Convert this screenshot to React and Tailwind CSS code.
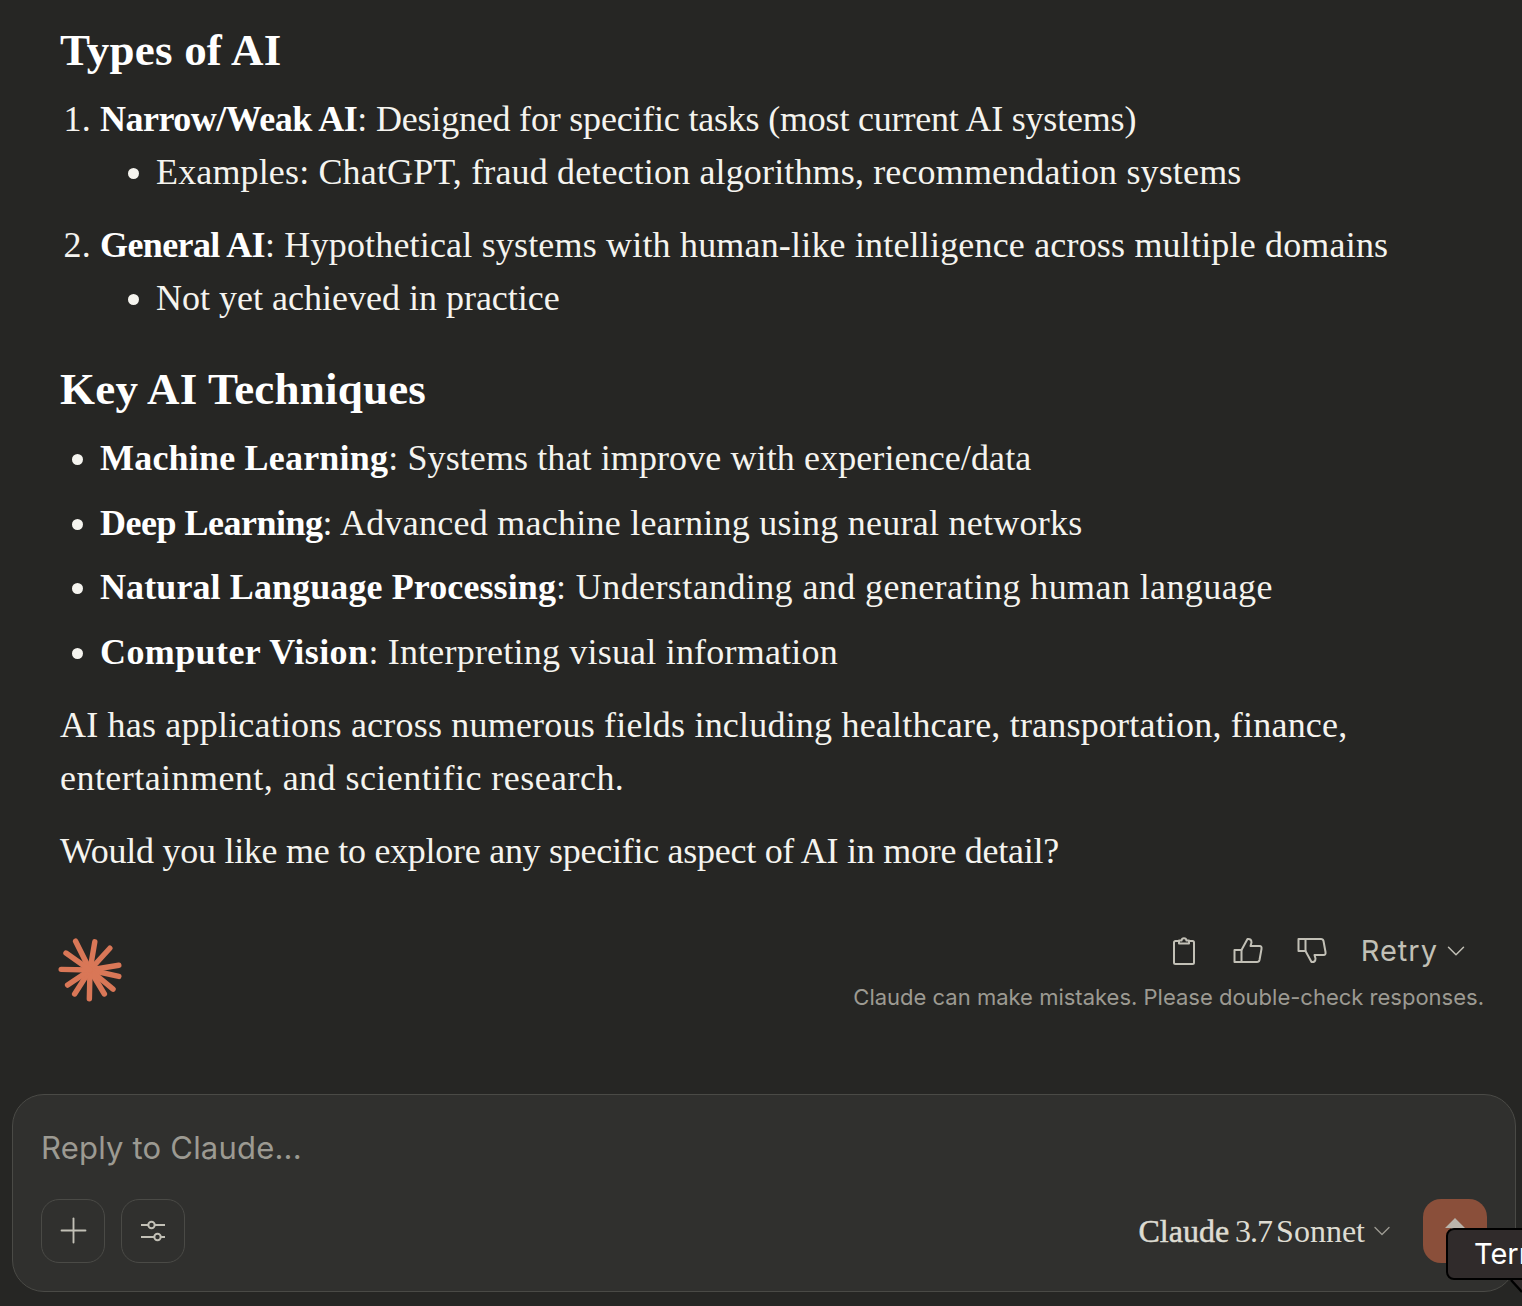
import { ChevronDown, Plus } from "lucide-react";

const serif = "font-['Liberation_Serif',serif]";
const sans = "font-['Inter',sans-serif]";

const rays = [
  [105, 60], [165, 62], [212, 82], [240, 135], [240, 170], [222, 210],
  [195, 225], [148, 240], [102, 225], [80, 197], [60, 148], [75, 97],
];

function Spark() {
  return (
    <svg width="64" height="64" viewBox="50 50 200 200">
      <circle cx="150" cy="150" r="24" fill="#d97757" />
      {rays.map(([x, y], i) => (
        <line key={i} x1="150" y1="150" x2={x} y2={y} stroke="#d97757" strokeWidth="17" strokeLinecap="round" />
      ))}
    </svg>
  );
}

function Clipboard() {
  return (
    <svg width="24" height="28" viewBox="0 0 24 28" fill="none" stroke="#c2c0b6" strokeWidth="2" strokeLinejoin="round">
      <path d="M7 4H3.5A1.5 1.5 0 0 0 2 5.5V25.5A1.5 1.5 0 0 0 3.5 27H20.5A1.5 1.5 0 0 0 22 25.5V5.5A1.5 1.5 0 0 0 20.5 4H17" />
      <path d="M7 6.5V3.5H9.5C10 0.5 14 0.5 14.5 3.5H17V6.5Z" />
    </svg>
  );
}

function Thumb({ down = false }) {
  return (
    <svg width="30" height="27" viewBox="0 0 30 27" fill="none" stroke="#c2c0b6" strokeWidth="2" strokeLinejoin="round" className={down ? "-scale-y-100" : ""}>
      <path d="M1.5 13H8.5V25H1.5Z" />
      <path d="M8.5 13 14.5 2Q18.5 1.5 18.5 5.5L17.5 9H26.5Q29 9 28.5 12L26.5 23Q26 25 24 25H8.5" />
    </svg>
  );
}

function Sliders() {
  return (
    <svg width="26" height="24" viewBox="0 0 26 24" fill="none" stroke="#c2c0b6" strokeWidth="2">
      <path d="M1 6h7M15 6h10M1 18h13M21 18h4" />
      <circle cx="11.5" cy="6" r="3.2" />
      <circle cx="17.5" cy="18" r="3.2" />
    </svg>
  );
}

function Strong({ className = "tracking-normal", children }) {
  return <strong className={`font-bold text-white ${className}`}>{children}</strong>;
}

export default function App() {
  return (
    <div className={`relative h-[1306px] w-full overflow-hidden bg-[#262624] pt-[28px] text-[36px] leading-[53px] tracking-[0.15px] text-[#f5f4ef] ${serif}`}>
      <div className="px-[60px]">
        <h2 className="text-[45px] font-bold leading-[44px] tracking-[0.2px] text-white">Types of AI</h2>
        <ol className="mt-[21px] list-decimal pl-[40px]">
          <li>
            <Strong className="tracking-[-0.5px]">Narrow/Weak AI</Strong>
            <span className="tracking-[-0.2px]">: Designed for specific tasks (most current AI systems)</span>
            <ul className="list-disc pl-[56px]">
              <li>Examples: ChatGPT, fraud detection algorithms, recommendation systems</li>
            </ul>
          </li>
          <li className="mt-[20px]">
            <Strong className="tracking-[-0.6px]">General AI</Strong>
            <span className="tracking-[0.18px]">: Hypothetical systems with human-like intelligence across multiple domains</span>
            <ul className="list-disc pl-[56px]">
              <li className="tracking-normal">Not yet achieved in practice</li>
            </ul>
          </li>
        </ol>

        <h2 className="mt-[42px] text-[45px] font-bold leading-[44px] tracking-[0.2px] text-white">Key AI Techniques</h2>
        <ul className="mt-[21px] flex list-disc flex-col gap-[11.5px] pl-[40px]">
          <li>
            <Strong className="tracking-[0.2px]">Machine Learning</Strong>
            <span className="tracking-[0.1px]">: Systems that improve with experience/data</span>
          </li>
          <li>
            <Strong className="tracking-[-0.5px]">Deep Learning</Strong>
            <span className="tracking-[0.25px]">: Advanced machine learning using neural networks</span>
          </li>
          <li>
            <Strong className="tracking-[0.1px]">Natural Language Processing</Strong>
            <span className="tracking-[0.4px]">: Understanding and generating human language</span>
          </li>
          <li>
            <Strong className="tracking-[0.4px]">Computer Vision</Strong>
            <span className="tracking-[0.2px]">: Interpreting visual information</span>
          </li>
        </ul>

        <p className="mt-[20px]">
          <span className="tracking-[0.2px]">AI has applications across numerous fields including healthcare, transportation, finance,</span>
          <br />
          <span className="tracking-[0.45px]">entertainment, and scientific research.</span>
        </p>
        <p className="mt-[20px] tracking-[-0.27px]">Would you like me to explore any specific aspect of AI in more detail?</p>
      </div>

      {/* Message footer */}
      <div className={`mt-[49px] flex h-[92px] items-start justify-between pl-[58px] pr-[38px] tracking-normal ${sans}`}>
        <div className="pt-[11px]">
          <Spark />
        </div>
        <div className="flex flex-col items-end">
          <div className="flex h-[48px] items-center pr-[13px] text-[#c2c0b6]">
            <div className="flex w-[64px] justify-center"><Clipboard /></div>
            <div className="flex w-[64px] justify-center"><Thumb /></div>
            <div className="flex w-[64px] justify-center"><Thumb down /></div>
            <span className="ml-[17px] text-[29px] leading-none tracking-[1px]">Retry</span>
            <ChevronDown size={30} strokeWidth={1.2} className="ml-[3px]" />
          </div>
          <p className="mt-[7px] text-[22px] leading-[30px] text-[#9c9a92]">
            Claude can make mistakes. Please double-check responses.
          </p>
        </div>
      </div>

      {/* Reply box */}
      <div className={`ml-[12px] mr-[6px] mt-[75px] h-[198px] rounded-[32px] border border-[#4a4a46] bg-[#30302e] px-[28px] tracking-normal ${sans}`}>
        <p className="pt-[34px] text-[31px] leading-[38px] tracking-[0.2px] text-[#9c9a92]">Reply to Claude...</p>
        <div className="mt-[32px] flex items-center">
          <div className="flex size-[64px] items-center justify-center rounded-[18px] border border-[#4a4a46] text-[#c2c0b6]">
            <Plus size={41} strokeWidth={1.1} />
          </div>
          <div className="ml-[16px] flex size-[64px] items-center justify-center rounded-[18px] border border-[#4a4a46]">
            <Sliders />
          </div>
          <div className={`ml-auto flex items-center text-[32px] leading-none text-[#dedcd2] ${serif}`}>
            <span className="[-webkit-text-stroke:0.5px_#dedcd2]">Claude</span>
            <span className="ml-[6px] tracking-[-1px]">3.7</span>
            <span className="ml-[4px]">Sonnet</span>
            <ChevronDown size={28} strokeWidth={1.2} className="ml-[3px] text-[#9c9a92]" />
          </div>
          <div className="ml-[27px] flex size-[64px] justify-center rounded-[18px] bg-[#8a4f3a] pt-[19px]">
            <svg width="22" height="22" viewBox="0 0 22 22"><path d="M11 0 21 10H15V22H7V10H1Z" fill="#b9b4ab" /></svg>
          </div>
        </div>
      </div>

      {/* Tooltip clipped by the window edge */}
      <div className={`absolute left-[1446px] top-[1228px] h-[52px] w-[120px] rounded-[8px] border-2 border-black bg-[#302b2b] pl-[26px] text-[29px] leading-[48px] tracking-normal text-white ${sans}`}>
        Terr
      </div>
      <svg className="absolute left-[1500px] top-[1276px]" width="22" height="20" viewBox="0 0 22 20">
        <path d="M4 4 H11 L22 16 V4Z" fill="#302b2b" />
        <path d="M11 4 L22 16" fill="none" stroke="#000" strokeWidth="2.5" />
      </svg>
    </div>
  );
}
